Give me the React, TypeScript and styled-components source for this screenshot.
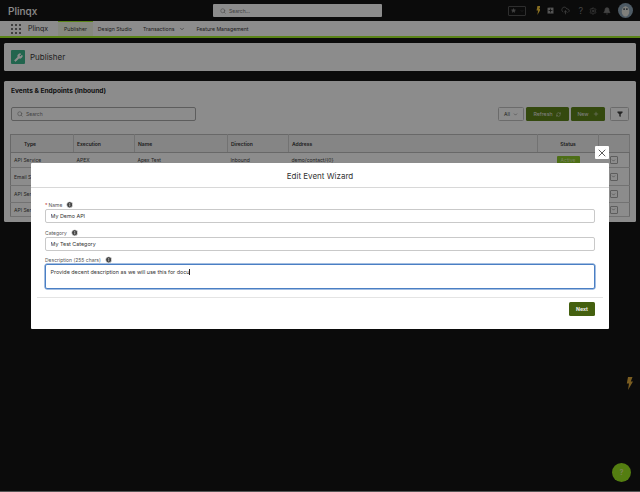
import React from "react";
import styled, { createGlobalStyle } from "styled-components";
import {
  Bell,
  ChevronDown,
  CloudUpload,
  Filter,
  Info,
  Plus,
  RefreshCw,
  Search,
  Settings,
  SquarePlus,
  Star,
  Wrench,
  X,
} from "lucide-react";

const GlobalStyle = createGlobalStyle`
  html, body {
    margin: 0;
    height: 100%;
    background: #141414;
    overflow: hidden;
  }
  body {
    font-family: "Inter", "Liberation Sans", sans-serif;
    color: #2b2b2b;
  }
  * {
    box-sizing: border-box;
  }
`;

const rows = [
  { type: "API Service", execution: "APEX", name: "Apex Test", direction: "Inbound", address: "demo/contact/{0}", active: true, height: 15 },
  { type: "Email Service", execution: "", name: "", direction: "", address: "", active: false, height: 18 },
  { type: "API Service", execution: "", name: "", direction: "", address: "", active: false, height: 17 },
  { type: "API Service", execution: "", name: "", direction: "", address: "", active: false, height: 14 },
];

const Page = styled.div`
  width: 640px;
  height: 492px;
  position: relative;
  display: flex;
  flex-direction: column;
  border-bottom: 1px solid #555;
`;

const TopBar = styled.header`
  height: 21px;
  background: #141414;
  display: flex;
  align-items: center;
  padding: 0 7px 0 8px;
`;

const Logo = styled.div`
  width: 205px;
  color: #fff;
  font-size: 10px;
  font-weight: 500;
`;

const GlobalSearch = styled.div`
  width: 169px;
  height: 13px;
  background: #fff;
  border-radius: 1px;
  display: flex;
  align-items: center;
  gap: 3px;
  padding-left: 7px;
  color: #777;
  font-size: 5px;
`;

const TopIcons = styled.div`
  margin-left: auto;
  display: flex;
  align-items: center;
  color: #7c7c7c;
  gap: 6px;
`;

const Favorites = styled.div`
  width: 18px;
  height: 10px;
  display: flex;
  align-items: center;
  justify-content: space-between;
  padding: 0 1px 0 2px;
  border: 1px solid #555;
  border-radius: 1px;
  margin-right: 4px;
`;

const QuestionMark = styled.span`
  margin-left: 2px;
  font-size: 9px;
  line-height: 9px;
`;

const Avatar = styled.svg`
  width: 15px;
  height: 15px;
  margin-left: 1px;
`;

const NavBar = styled.nav`
  height: 17px;
  background: #fff;
  border-bottom: 2px solid #a5f02c;
  display: flex;
  align-items: stretch;
  padding-left: 11px;
`;

const AppGrid = styled.div`
  width: 10px;
  height: 10px;
  margin-top: 3px;
  display: grid;
  grid-template-columns: repeat(3, 2px);
  gap: 2px;
  span {
    background: #444;
    border-radius: 50%;
  }
`;

const AppName = styled.div`
  margin-left: 7px;
  width: 30px;
  font-size: 7px;
  line-height: 16px;
  color: #333;
`;

const NavItem = styled.div<{ $active?: boolean }>`
  display: flex;
  align-items: center;
  gap: 5px;
  padding: 0 ${(p) => (p.$active ? 6 : 5)}px;
  margin-right: ${(p) => (p.$active ? 0 : 1)}px;
  font-size: 5.2px;
  color: #3a3a3a;
  white-space: nowrap;
  background: ${(p) => (p.$active ? "#f4fae8" : "transparent")};
  border-top: ${(p) => (p.$active ? "1px solid #a5f02c" : "none")};
`;

const Main = styled.main`
  padding: 5px 4px 0;
  display: flex;
  flex-direction: column;
  gap: 10px;
`;

const Card = styled.section`
  background: #fff;
  border-radius: 1.5px;
`;

const PageHeader = styled(Card)`
  height: 28px;
  display: flex;
  align-items: center;
  gap: 5px;
  padding-left: 7px;
  font-size: 8px;
  color: #3a3a3a;
`;

const PageIcon = styled.div`
  width: 14px;
  height: 14px;
  background: #3fb88f;
  border-radius: 1px;
  display: flex;
  align-items: center;
  justify-content: center;
  color: #fff;
`;

const EventsCard = styled(Card)`
  height: 141px;
  padding: 6px 7px 0 7px;
`;

const EventsTitle = styled.h2`
  margin: 0;
  font-size: 6.6px;
  line-height: 8px;
  font-weight: 700;
  color: #222;
`;

const Toolbar = styled.div`
  margin-top: 12px;
  height: 14px;
  display: flex;
  align-items: center;
  gap: 2px;
`;

const SearchBox = styled.div`
  width: 185px;
  height: 14px;
  border: 1px solid #aaa;
  border-radius: 2px;
  display: flex;
  align-items: center;
  gap: 3px;
  padding-left: 5px;
  font-size: 5px;
  color: #777;
  margin-right: auto;
`;

const OutlineButton = styled.div<{ $width: number; $gap?: number }>`
  width: ${(p) => p.$width}px;
  height: 14px;
  margin-left: ${(p) => p.$gap ?? 0}px;
  border: 1px solid #c4c4c4;
  border-radius: 1.5px;
  display: flex;
  align-items: center;
  justify-content: center;
  gap: 3px;
  font-size: 5px;
  color: #444;
`;

const GreenButton = styled.div<{ $width: number }>`
  width: ${(p) => p.$width}px;
  height: 14px;
  background: #5f861a;
  border-radius: 1.5px;
  color: #e8e8e8;
  font-size: 5.2px;
  display: flex;
  align-items: center;
  justify-content: center;
  gap: 4px;
`;

const TableWrap = styled.div`
  margin: 13px 0 0 -1px;
  width: 620px;
`;

const Table = styled.table`
  width: 100%;
  table-layout: fixed;
  border-collapse: collapse;
  border: 1px solid #bdbdbd;
  font-size: 5px;
`;

const HeadCell = styled.th<{ $center?: boolean; $inset?: number }>`
  height: 18px;
  padding: 0 3px 0 ${(p) => p.$inset ?? 3}px;
  text-align: ${(p) => (p.$center ? "center" : "left")};
  font-weight: 600;
  color: #333;
  background: #f3f3f3;
  border-right: 1px solid #d0d0d0;
  border-bottom: 1px solid #bdbdbd;
`;

const Cell = styled.td<{ $center?: boolean }>`
  padding: 0 3px;
  text-align: ${(p) => (p.$center ? "center" : "left")};
  white-space: nowrap;
  overflow: hidden;
  color: #444;
  border-bottom: 1px solid #d0d0d0;
`;

const Row = styled.tr<{ $height: number }>`
  height: ${(p) => p.$height}px;
`;

const Badge = styled.span`
  display: inline-block;
  width: 23px;
  height: 9px;
  line-height: 9px;
  background: #8cc828;
  color: #d8e8b0;
  border-radius: 1px;
  font-size: 5px;
`;

const RowMenu = styled.span`
  width: 8px;
  height: 8px;
  border: 1px solid #aaa;
  border-radius: 1px;
  display: inline-flex;
  align-items: center;
  justify-content: center;
  color: #444;
`;

const BoltShape = styled.svg<{ $height: number }>`
  height: ${(p) => p.$height}px;
  width: auto;
  display: block;
`;

const FloatingBolt = styled.div`
  position: absolute;
  left: 626px;
  top: 377px;
`;

const HelpBubble = styled.div`
  position: absolute;
  left: 612px;
  top: 463px;
  width: 19px;
  height: 19px;
  border-radius: 50%;
  background: #9ae61f;
  color: #f0f0d0;
  font-size: 7px;
  display: flex;
  align-items: center;
  justify-content: center;
`;

const Backdrop = styled.div`
  position: absolute;
  inset: 0;
  background: rgba(0, 0, 0, 0.45);
  backdrop-filter: blur(0.6px);
`;

const Modal = styled.div`
  position: absolute;
  left: 31px;
  top: 163px;
  width: 578px;
  height: 166px;
  background: #fff;
  border-radius: 1px;
`;

const CloseButton = styled.div`
  position: absolute;
  right: 0;
  top: -17px;
  width: 14px;
  height: 13px;
  background: #fff;
  border-radius: 1px;
  display: flex;
  align-items: center;
  justify-content: center;
  color: #333;
`;

const ModalTitle = styled.div`
  height: 25px;
  padding-top: 1px;
  border-bottom: 1px solid #d8d8d8;
  display: flex;
  align-items: center;
  justify-content: center;
  font-size: 8px;
  color: #333;
`;

const Form = styled.div`
  padding: 12px 14px 0;
  display: flex;
  flex-direction: column;
`;

const Field = styled.div<{ $gap?: number }>`
  margin-bottom: ${(p) => p.$gap ?? 5}px;
`;

const Label = styled.label`
  height: 9px;
  display: flex;
  align-items: center;
  gap: 4px;
  font-size: 5px;
  color: #555;
  em {
    color: #c23934;
    font-style: normal;
    margin-right: -3px;
  }
`;

const TextInput = styled.input`
  display: block;
  width: 100%;
  height: 14px;
  border: 1px solid #c9c9c9;
  border-radius: 2px;
  padding: 0 4.5px;
  font: 5.4px "Inter", "Liberation Sans", sans-serif;
  color: #333;
  outline: none;
  background: #fff;
`;

const DescriptionBox = styled.div`
  height: 25px;
  border: 1px solid #4a7fc4;
  border-bottom-width: 1.5px;
  border-radius: 2px;
  box-shadow: 0 0 0 0.5px #4a7fc4;
  padding: 4px 4.5px;
  font-size: 5.4px;
  line-height: 7px;
  color: #333;
  span {
    border-right: 0.7px solid #222;
  }
`;

const Divider = styled.hr`
  margin: 3px 6px 0;
  border: none;
  border-top: 1px solid #e4e4e4;
`;

const Footer = styled.div`
  display: flex;
  justify-content: flex-end;
  padding: 4px 14px 0;
`;

const NextButton = styled.div`
  width: 26px;
  height: 14px;
  background: #44600f;
  border-radius: 1.5px;
  color: #eee;
  font-size: 5.2px;
  font-weight: 700;
  display: flex;
  align-items: center;
  justify-content: center;
`;

const InfoMark = () => <Info size={7.5} fill="#444" color="#fff" strokeWidth={2} />;

const Bolt = ({ height, color }: { height: number; color: string }) => (
  <BoltShape $height={height} viewBox="0 0 7 13">
    <polygon points="2,0 6.5,0 4.8,4.4 7,4.4 2,13 3,6.6 0.8,6.6" fill={color} />
  </BoltShape>
);

export default function App() {
  return (
    <>
      <GlobalStyle />
      <Page>
        <TopBar>
          <Logo>Plinqx</Logo>
          <GlobalSearch>
            <Search size={6} />
            Search...
          </GlobalSearch>
          <TopIcons>
            <Favorites>
              <Star size={5} fill="currentColor" />
              <ChevronDown size={4} />
            </Favorites>
            <Bolt height={9} color="#f5c63c" />
            <SquarePlus size={9} color="#141414" fill="#9a9a9a" />
            <CloudUpload size={9} />
            <QuestionMark>?</QuestionMark>
            <Settings size={8} />
            <Bell size={8} fill="currentColor" />
            <Avatar viewBox="0 0 16 16">
              <circle cx="8" cy="8" r="8" fill="#8fa6b8" />
              <ellipse cx="8" cy="9" rx="4" ry="5.5" fill="#e8e8e0" />
              <circle cx="6.5" cy="6.5" r="0.9" fill="#234" />
              <circle cx="9.5" cy="6.5" r="0.9" fill="#234" />
            </Avatar>
          </TopIcons>
        </TopBar>
        <NavBar>
          <AppGrid>
            {Array.from({ length: 9 }, (_, i) => (
              <span key={i} />
            ))}
          </AppGrid>
          <AppName>Plinqx</AppName>
          <NavItem $active>Publisher</NavItem>
          <NavItem>Design Studio</NavItem>
          <NavItem>
            Transactions
            <ChevronDown size={6} />
          </NavItem>
          <NavItem>Feature Management</NavItem>
        </NavBar>
        <Main>
          <PageHeader>
            <PageIcon>
              <Wrench size={9} fill="#fff" />
            </PageIcon>
            Publisher
          </PageHeader>
          <EventsCard>
            <EventsTitle>Events &amp; Endpoints (Inbound)</EventsTitle>
            <Toolbar>
              <SearchBox>
                <Search size={6} />
                Search
              </SearchBox>
              <OutlineButton $width={26}>
                All
                <ChevronDown size={5} />
              </OutlineButton>
              <GreenButton $width={43}>
                Refresh
                <RefreshCw size={5} />
              </GreenButton>
              <GreenButton $width={34}>
                New
                <Plus size={6} />
              </GreenButton>
              <OutlineButton $width={19} $gap={3}>
                <Filter size={6} fill="#444" />
              </OutlineButton>
            </Toolbar>
            <TableWrap>
              <Table>
                <colgroup>
                  <col style={{ width: 63 }} />
                  <col style={{ width: 61 }} />
                  <col style={{ width: 93 }} />
                  <col style={{ width: 61 }} />
                  <col style={{ width: 249 }} />
                  <col style={{ width: 61 }} />
                  <col />
                </colgroup>
                <thead>
                  <tr>
                    <HeadCell $inset={13}>Type</HeadCell>
                    <HeadCell>Execution</HeadCell>
                    <HeadCell>Name</HeadCell>
                    <HeadCell>Direction</HeadCell>
                    <HeadCell>Address</HeadCell>
                    <HeadCell $center>Status</HeadCell>
                    <HeadCell />
                  </tr>
                </thead>
                <tbody>
                  {rows.map((row, i) => (
                    <Row key={i} $height={row.height}>
                      <Cell>{row.type}</Cell>
                      <Cell>{row.execution}</Cell>
                      <Cell>{row.name}</Cell>
                      <Cell>{row.direction}</Cell>
                      <Cell>{row.address}</Cell>
                      <Cell $center>{row.active && <Badge>Active</Badge>}</Cell>
                      <Cell $center>
                        <RowMenu>
                          <ChevronDown size={5} />
                        </RowMenu>
                      </Cell>
                    </Row>
                  ))}
                </tbody>
              </Table>
            </TableWrap>
          </EventsCard>
        </Main>
        <FloatingBolt>
          <Bolt height={13} color="#e0aa3c" />
        </FloatingBolt>
        <HelpBubble>?</HelpBubble>
        <Backdrop />
        <Modal>
          <CloseButton>
            <X size={12} strokeWidth={1.6} />
          </CloseButton>
          <ModalTitle>Edit Event Wizard</ModalTitle>
          <Form>
            <Field>
              <Label>
                <em>*</em> Name <InfoMark />
              </Label>
              <TextInput readOnly value="My Demo API" />
            </Field>
            <Field $gap={4}>
              <Label>
                Category <InfoMark />
              </Label>
              <TextInput readOnly value="My Test Category" />
            </Field>
            <Field>
              <Label>
                Description (255 chars) <InfoMark />
              </Label>
              <DescriptionBox>
                <span>Provide decent description as we will use this for docu</span>
              </DescriptionBox>
            </Field>
          </Form>
          <Divider />
          <Footer>
            <NextButton>Next</NextButton>
          </Footer>
        </Modal>
      </Page>
    </>
  );
}
